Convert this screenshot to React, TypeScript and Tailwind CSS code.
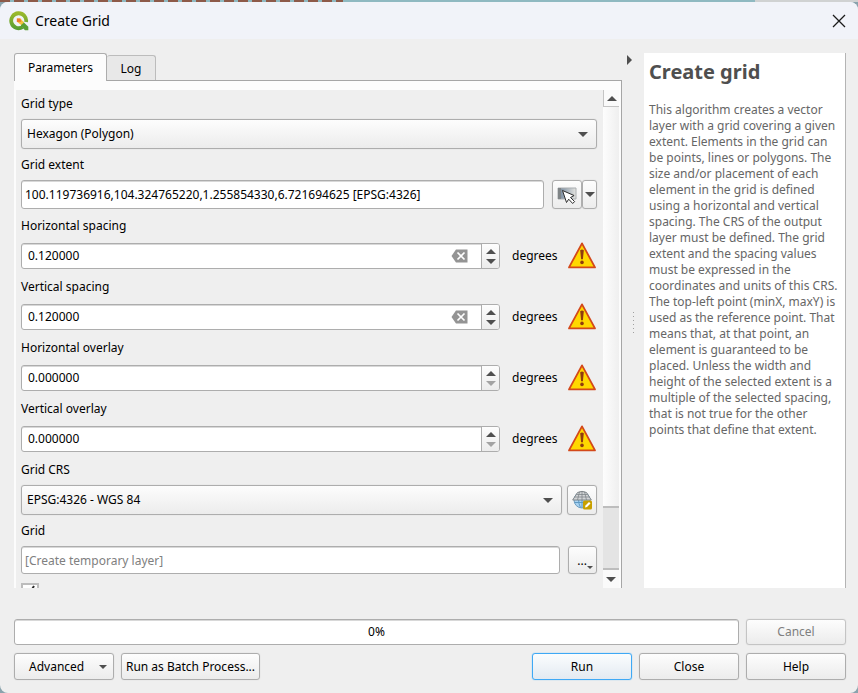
import { useState, type ReactNode } from "react";

const buttonBase =
  "rounded-[3px] border border-[#adadad] bg-linear-to-b from-[#fdfdfd] to-[#ececec] text-xs leading-4 shadow-[0_0_1px_#c4c4c4]";
const fieldBase =
  "rounded-[3px] border border-[#adadad] bg-white text-xs shadow-[inset_0_1px_0_#d8d8d8]";

function Arrow({ up = false, size = 10, faded = false }: { up?: boolean; size?: number; faded?: boolean }) {
  return (
    <svg width={size} height={size / 2} viewBox="0 0 10 5" fill={faded ? "#a3a3a3" : "#4f4f4f"} aria-hidden="true">
      <path d={up ? "M0 5 5 0l5 5z" : "M0 0h10L5 5z"} />
    </svg>
  );
}

function Logo() {
  return (
    <svg width="20" height="20" viewBox="0 0 20 20" aria-hidden="true">
      <defs>
        <linearGradient id="ring" x1="0" y1="0" x2="0" y2="1">
          <stop offset="0" stopColor="#9ab92c" />
          <stop offset="1" stopColor="#589f33" />
        </linearGradient>
      </defs>
      <path
        d="M13.500 16.200A7.500 7.500 0 1 1 17.100 11"
        fill="none"
        stroke="url(#ring)"
        strokeWidth="3.800"
      />
      <path d="M12 12.500l2-2 5.300 5.300v3.400h-3.300l-4-4z" fill="#5b9f34" />
      <path d="M8 7.500h3.500l3.500 4-2.800 2.500L8 10.800z" fill="#f5c33a" />
      <path d="M7.800 7.500h3.400l1.200 3.300-4.600.2z" fill="#ee7a2a" />
    </svg>
  );
}

function Warning() {
  return (
    <svg width="30" height="30" viewBox="0 0 30 30" role="img" aria-label="Warning" className="shrink-0">
      <path d="M15 2.4 28 26.4H2z" fill="#ffd800" stroke="#d3481a" strokeWidth="1.8" strokeLinejoin="round" />
      <path d="M13.2 9.2q1.8-1.2 3.6 0l-.9 9h-1.8z" fill="#8f3b0e" />
      <circle cx="15" cy="21.4" r="1.8" fill="#8f3b0e" />
    </svg>
  );
}

function Clear() {
  return (
    <svg width="17" height="14" viewBox="0 0 17 14" aria-hidden="true">
      <path d="M5 .5h11.5v13H5L.5 7z" fill="#949494" />
      <path d="m6.5 3.5 7 7m0-7-7 7" stroke="#fff" strokeWidth="1.7" />
    </svg>
  );
}

function ExtentIcon() {
  return (
    <svg width="20" height="20" viewBox="0 0 20 20" aria-hidden="true">
      <defs>
        <linearGradient id="canvas" x1="0" y1="0" x2="1" y2="0">
          <stop offset="0" stopColor="#6d8299" />
          <stop offset="1" stopColor="#e4e4e0" />
        </linearGradient>
      </defs>
      <path d="M1 3h18v11H1z" fill="url(#canvas)" stroke="#a9adb0" />
      <path d="M1 3h3v11H1z" fill="#7f8486" />
      <path d="m5.5 5.5 4 12 2.2-3.3 4 4.3 1.9-1.9-4.1-4.1 3.6-2z" fill="#fff" stroke="#2d2d2d" strokeLinejoin="round" />
    </svg>
  );
}

function GlobeIcon() {
  return (
    <svg width="20" height="20" viewBox="0 0 20 20" aria-hidden="true">
      <circle cx="10" cy="10" r="8" fill="#a9d3f2" stroke="#6e9dbf" />
      <path d="M3 12.5h14M10 9v9M6.5 9q0 5 2 8.5" fill="none" stroke="#5f9ac4" />
      <path d="M.7 10 5.5 2.5Q10 .2 14.500 2.500L19.300 10z" fill="#d2d5d7" stroke="#80868a" />
      <path d="M3 7h14M4.5 4.5h11M10 1.500V10M7.500 1.800 5.500 10M12.500 1.800l2 8.200" fill="none" stroke="#80868a" strokeWidth=".8" />
      <rect x="11" y="10.5" width="9" height="9" rx="1.5" fill="#c8a000" />
      <path d="m13 17.500.5-2 3.500-3.500 1.500 1.500-3.500 3.500z" fill="#fff" />
    </svg>
  );
}

function Group({ id, label, children }: { id: string; label: string; children: ReactNode }) {
  return (
    <div>
      <label htmlFor={id} className="block pb-[6px] leading-[18px]">
        {label}
      </label>
      <div className="flex h-[30px] items-start">{children}</div>
    </div>
  );
}

function Combo({ id, value }: { id: string; value: string }) {
  return (
    <div className="relative min-w-0 grow">
      <select id={id} className={`${buttonBase} block h-[30px] w-full appearance-none pr-6 pl-[5px]`}>
        <option>{value}</option>
      </select>
      <span className="pointer-events-none absolute inset-y-0 right-[9px] flex items-center">
        <Arrow />
      </span>
    </div>
  );
}

function Spin({ id, label, initial, clearable = false }: { id: string; label: string; initial: string; clearable?: boolean }) {
  const [value, setValue] = useState(initial);
  const step = (by: number) => setValue(Math.max(0, Number(value) + by).toFixed(6));
  return (
    <Group id={id} label={label}>
      <div className="flex h-[30px] min-w-0 grow items-center">
        <div className={`${fieldBase} flex h-[26px] min-w-0 grow items-stretch overflow-hidden`}>
          <input
            id={id}
            value={value}
            onChange={(e) => setValue(e.target.value)}
            className="min-w-0 grow bg-transparent pl-[6px] outline-none"
          />
          {clearable && (
            <button type="button" aria-label={`Clear ${label}`} onClick={() => setValue("0.000000")} className="mr-[13px]">
              <Clear />
            </button>
          )}
          <div className="flex w-[18px] shrink-0 flex-col border-l border-[#adadad] bg-linear-to-b from-[#fdfdfd] to-[#ececec]">
            <button type="button" aria-label={`Increase ${label}`} onClick={() => step(0.1)} className="flex grow items-end justify-center pb-[2px]">
              <Arrow up />
            </button>
            <button type="button" aria-label={`Decrease ${label}`} onClick={() => step(-0.1)} className="flex grow items-start justify-center pt-[3px]">
              <Arrow faded={!clearable} />
            </button>
          </div>
        </div>
        <span className="w-[67px] shrink-0 pl-3">degrees</span>
        <Warning />
      </div>
    </Group>
  );
}

export default function App() {
  return (
    <div className="h-screen overflow-hidden bg-[#8aa3ad] font-['Noto_Sans','Open_Sans',sans-serif] text-xs text-black">
      <div className="flex h-full flex-col">
        <div className="flex h-[2px] shrink-0">
          <div className="w-2/5 bg-[repeating-linear-gradient(90deg,#8d5a49_0_10px,#8fb9c1_10px_14px)]" />
          <div className="grow bg-[#8fb9c1]" />
          <div className="w-[12%] bg-[#d0d2d2]" />
        </div>
        <main className="flex min-h-0 grow flex-col overflow-hidden rounded-lg bg-[#efefef]">
          <header className="flex h-[37px] shrink-0 items-center bg-[#f1f3f9] pr-3 pl-[9px]">
            <Logo />
            <h1 className="grow pl-[6px] text-sm">Create Grid</h1>
            <button type="button" aria-label="Close window">
              <svg width="14" height="14" viewBox="0 0 14 14" stroke="#1b1b1b" strokeWidth="1.3" aria-hidden="true">
                <path d="m1 1 12 12M13 1 1 13" />
              </svg>
            </button>
          </header>

          <div className="flex min-h-0 grow pt-[14px] pr-3 pl-[14px]">
            <section className="flex min-w-0 grow flex-col">
              <div role="tablist" className="flex h-[27px] shrink-0 items-end">
                <button type="button" role="tab" aria-selected="true" className="z-10 -mb-px h-[28px] w-[93px] rounded-t-[3px] border border-b-0 border-[#adadad] bg-[#fcfcfc]">
                  Parameters
                </button>
                <button type="button" role="tab" aria-selected="false" className="h-[25px] w-[49px] rounded-t-[3px] border border-b-0 border-l-0 border-[#bcbcbc] bg-[#e8e8e8] pt-[2px]">
                  Log
                </button>
              </div>
              <div className="flex min-h-0 grow border-t border-r border-[#a6a6a6] bg-[#fcfcfc] pt-[9px] pr-[2px] pl-[2px]">
                <form className="flex min-w-0 grow flex-col gap-[7px] overflow-hidden bg-[#efefef] pt-[5px] pr-[6px] pl-[5px]">
                  <Group id="grid-type" label="Grid type">
                    <Combo id="grid-type" value="Hexagon (Polygon)" />
                  </Group>
                  <Group id="extent" label="Grid extent">
                    <input
                      id="extent"
                      defaultValue="100.119736916,104.324765220,1.255854330,6.721694625 [EPSG:4326]"
                      className={`${fieldBase} h-[29px] min-w-0 grow px-[3px]`}
                    />
                    <button type="button" aria-label="Set extent from canvas" className={`${buttonBase} ml-2 flex h-[29px] w-[30px] items-center justify-center`}>
                      <ExtentIcon />
                    </button>
                    <button type="button" aria-label="Extent options" className={`${buttonBase} flex h-[29px] w-[15px] items-center justify-center`}>
                      <Arrow />
                    </button>
                  </Group>
                  <Spin id="h-spacing" label="Horizontal spacing" initial="0.120000" clearable />
                  <Spin id="v-spacing" label="Vertical spacing" initial="0.120000" clearable />
                  <Spin id="h-overlay" label="Horizontal overlay" initial="0.000000" />
                  <Spin id="v-overlay" label="Vertical overlay" initial="0.000000" />
                  <Group id="crs" label="Grid CRS">
                    <Combo id="crs" value="EPSG:4326 - WGS 84" />
                    <button type="button" aria-label="Select CRS" className={`${buttonBase} ml-[5px] flex h-[30px] w-[30px] items-center justify-center`}>
                      <GlobeIcon />
                    </button>
                  </Group>
                  <Group id="output" label="Grid">
                    <input
                      id="output"
                      placeholder="[Create temporary layer]"
                      className={`${fieldBase} h-[28px] min-w-0 grow px-[3px] placeholder:text-[#808080]`}
                    />
                    <button type="button" aria-label="Output options" className={`${buttonBase} ml-2 flex h-[28px] w-[29px] items-end justify-end pr-[3px] pb-1`}>
                      <span>...</span>
                      <Arrow size={6} />
                    </button>
                  </Group>
                  <div className="relative size-[18px] shrink-0">
                    <input
                      type="checkbox"
                      defaultChecked
                      aria-label="Open output file after running algorithm"
                      className="peer block size-[18px] appearance-none border-2 border-[#bdbdbd] bg-white"
                    />
                    <svg
                      viewBox="0 0 18 18"
                      className="pointer-events-none invisible absolute inset-0 peer-checked:visible"
                      fill="none"
                      stroke="#2b2b2b"
                      strokeWidth="2"
                      aria-hidden="true"
                    >
                      <path d="m4 9 3 4 6-10" />
                    </svg>
                  </div>
                </form>
                <div className="flex w-4 shrink-0 flex-col">
                  <button type="button" aria-label="Scroll up" className="flex h-[17px] shrink-0 items-center justify-center border-b border-l border-[#c4c4c4] bg-[#fafafa]">
                    <Arrow up />
                  </button>
                  <div className="grow-[20] bg-linear-to-r from-[#fdfdfd] to-[#efefef]" />
                  <div className="grow-[3] border-y-2 border-[#bdbdbd] bg-[#e4e4e4]" />
                  <button type="button" aria-label="Scroll down" className="flex h-[18px] shrink-0 items-center justify-center bg-[#fafafa]">
                    <Arrow />
                  </button>
                </div>
              </div>
            </section>

            <div className="flex w-[22px] shrink-0 flex-col items-center">
              <svg width="5" height="10" viewBox="0 0 5 10" fill="#4f4f4f" className="mt-[2px] mr-[7px]" aria-hidden="true">
                <path d="M0 0 5 5 0 10z" />
              </svg>
              <div className="flex grow flex-col items-center justify-center gap-[3px] pb-2">
                {[0, 1, 2, 3, 4, 5].map((dot) => (
                  <span key={dot} className="size-px bg-[#a0a0a0]" />
                ))}
              </div>
            </div>

            <aside className="w-[202px] shrink-0 overflow-hidden border-r border-[#b4b4b4] bg-white pr-[6px] pl-[5px]">
              <h2 className="pt-[5px] text-xl leading-[28px] font-bold text-[#4f4f4f]">Create grid</h2>
              <p className="pt-4 leading-4 text-[#666666]">
                This algorithm creates a vector layer with a grid covering a given extent. Elements in the grid can be
                points, lines or polygons. The size and/or placement of each element in the grid is defined using a
                horizontal and vertical spacing. The CRS of the output layer must be defined. The grid extent and the
                spacing values must be expressed in the coordinates and units of this CRS. The top-left point (minX,
                maxY) is used as the reference point. That means that, at that point, an element is guaranteed to be
                placed. Unless the width and height of the selected extent is a multiple of the selected spacing, that
                is not true for the other points that define that extent.
              </p>
            </aside>
          </div>

          <footer className="flex shrink-0 flex-col gap-2 pt-[31px] pr-3 pb-[13px] pl-[14px]">
            <div className="flex gap-[7px]">
              <div role="progressbar" aria-valuenow={0} aria-label="Progress" className={`${fieldBase} flex h-[26px] grow items-center justify-center`}>
                0%
              </div>
              <button type="button" disabled className={`${buttonBase} h-[26px] w-[100px] border-[#c4c4c4] text-[#7f7f7f]`}>
                Cancel
              </button>
            </div>
            <div className="flex gap-[7px]">
              <button type="button" className={`${buttonBase} flex h-[27px] w-[100px] items-center justify-between pr-[6px] pl-[14px]`}>
                Advanced
                <Arrow size={8} />
              </button>
              <button type="button" className={`${buttonBase} h-[27px] w-[139px] whitespace-nowrap`}>
                Run as Batch Process...
              </button>
              <div className="grow" />
              <button type="submit" className="h-[27px] w-[100px] rounded-[3px] border border-[#3fa9f5] bg-linear-to-b from-[#fbfdfe] to-[#e3eaf1] text-xs leading-4 shadow-[0_0_1px_#3fa9f5]">
                Run
              </button>
              <button type="button" className={`${buttonBase} h-[27px] w-[100px]`}>
                Close
              </button>
              <button type="button" className={`${buttonBase} h-[27px] w-[100px]`}>
                Help
              </button>
            </div>
          </footer>
        </main>
      </div>
    </div>
  );
}
